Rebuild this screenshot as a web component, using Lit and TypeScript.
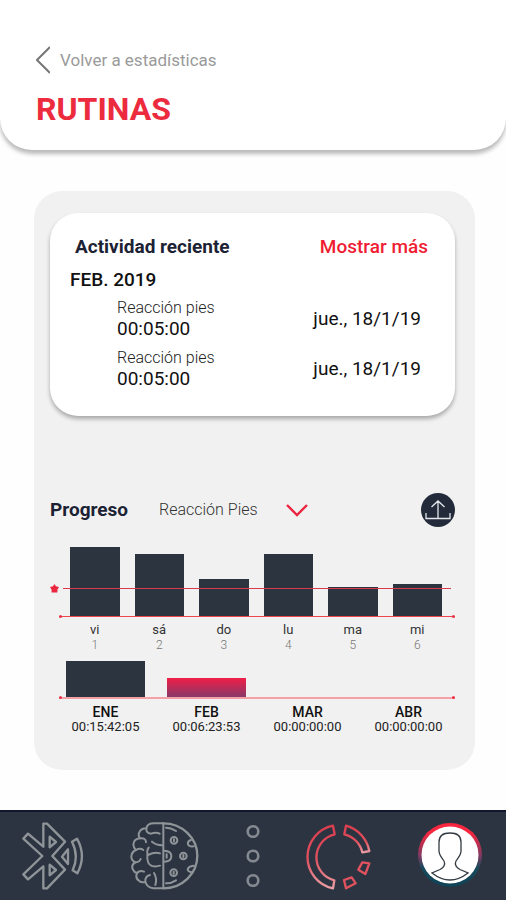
import { LitElement, html, svg, css } from "lit";
import { customElement, property } from "lit/decorators.js";

interface Activity {
  name: string;
  time: string;
  date: string;
}

interface Day {
  label: string;
  day: number;
  height: number;
}

interface Month {
  label: string;
  time: string;
  height: number;
  current?: boolean;
}

const ACTIVITIES: Activity[] = [
  { name: "Reacción pies", time: "00:05:00", date: "jue., 18/1/19" },
  { name: "Reacción pies", time: "00:05:00", date: "jue., 18/1/19" },
];

const DAYS: Day[] = [
  { label: "vi", day: 1, height: 70 },
  { label: "sá", day: 2, height: 63 },
  { label: "do", day: 3, height: 38 },
  { label: "lu", day: 4, height: 63 },
  { label: "ma", day: 5, height: 30 },
  { label: "mi", day: 6, height: 33 },
];

const MONTHS: Month[] = [
  { label: "ENE", time: "00:15:42:05", height: 37 },
  { label: "FEB", time: "00:06:23:53", height: 20, current: true },
  { label: "MAR", time: "00:00:00:00", height: 0 },
  { label: "ABR", time: "00:00:00:00", height: 0 },
];

@customElement("recent-activity")
export class RecentActivity extends LitElement {
  static styles = css`
    :host {
      display: block;
      background: #fff;
      border-radius: 28px;
      box-shadow: 0 3px 4px rgba(0, 0, 0, 0.3);
      padding: 18px 27px 26px 20px;
      color: #111;
    }
    .head {
      display: flex;
      justify-content: space-between;
      align-items: center;
      height: 32px;
      padding-left: 5px;
    }
    h2 {
      margin: 0;
      font-size: 19px;
      line-height: 24px;
      font-weight: 700;
      color: #1c2233;
    }
    .more {
      font-size: 19px;
      line-height: 24px;
      font-weight: 500;
      color: #f01c33;
      text-decoration: none;
    }
    h3 {
      margin: 5px 0 6px;
      font-size: 19px;
      line-height: 24px;
      font-weight: 500;
    }
    ul {
      list-style: none;
      margin: 0;
      padding: 0 7px 0 47px;
      display: grid;
      gap: 8px;
    }
    li {
      display: flex;
      justify-content: space-between;
      align-items: center;
    }
    .name {
      font-size: 16px;
      line-height: 20px;
      font-weight: 300;
      color: #222;
    }
    .time,
    .date {
      font-size: 19px;
      line-height: 22px;
    }
  `;

  render() {
    return html`
      <div class="head">
        <h2>Actividad reciente</h2>
        <a class="more" href="#actividad">Mostrar más</a>
      </div>
      <h3>FEB. 2019</h3>
      <ul>
        ${ACTIVITIES.map(
          (a) => html`<li>
            <div>
              <div class="name">${a.name}</div>
              <div class="time">${a.time}</div>
            </div>
            <div class="date">${a.date}</div>
          </li>`
        )}
      </ul>
    `;
  }
}

@customElement("progress-charts")
export class ProgressCharts extends LitElement {
  static styles = css`
    :host {
      display: block;
    }
    .head {
      display: flex;
      align-items: center;
      height: 34px;
      margin-bottom: 20px;
    }
    h2 {
      margin: 0;
      flex: 0 0 109px;
      font-size: 19px;
      line-height: 24px;
      font-weight: 700;
      color: #1c2233;
    }
    .picker {
      display: grid;
      align-items: center;
      width: 150px;
    }
    .picker > * {
      grid-area: 1 / 1;
    }
    select {
      appearance: none;
      width: 100%;
      border: 0;
      margin: 0;
      padding: 0;
      background: none;
      font: 300 16px/24px Roboto, sans-serif;
      color: #333;
    }
    .chevron {
      justify-self: end;
      pointer-events: none;
    }
    .upload {
      margin-left: auto;
      width: 34px;
      height: 34px;
      border: 0;
      padding: 0;
      border-radius: 50%;
      background: #232b3a;
      display: grid;
      place-items: center;
    }
    svg {
      display: block;
      fill: none;
    }
    .plot {
      position: relative;
      display: grid;
      align-items: end;
    }
    .days,
    .day-labels {
      grid-template-columns: repeat(6, 1fr);
      column-gap: 15px;
      padding: 0 13px 0 20px;
    }
    .days {
      height: 70px;
    }
    .months,
    .month-labels {
      grid-template-columns: repeat(4, 1fr);
      column-gap: 22px;
      padding: 0 7px 0 16px;
    }
    .months {
      height: 37px;
      margin-top: 8px;
    }
    .bar {
      background: #2c3440;
    }
    .current {
      background: linear-gradient(#f01f47, #83396b);
    }
    .axis {
      position: absolute;
      left: 9px;
      right: 0;
      bottom: 0;
      height: 1px;
      background: #f0454f;
    }
    .months .axis {
      bottom: -1px;
      height: 2px;
      background: #f5a0a6;
    }
    .axis::before,
    .axis::after {
      content: "";
      position: absolute;
      top: -1px;
      width: 3px;
      height: 3px;
      border-radius: 50%;
      background: #ea3346;
    }
    .axis::before {
      left: 0;
    }
    .axis::after {
      right: 0;
    }
    .goal {
      position: absolute;
      left: 0;
      right: 4px;
      bottom: 24px;
      display: flex;
      align-items: center;
      gap: 4px;
    }
    .goal-line {
      flex: 1;
      height: 1px;
      background: #d93a4c;
    }
    .labels {
      display: grid;
      list-style: none;
      margin: 0;
      text-align: center;
    }
    .labels li {
      display: grid;
      justify-items: center;
    }
    .day-labels {
      margin-top: 5px;
    }
    .month-labels {
      margin-top: 6px;
    }
    .day {
      font-size: 13px;
      line-height: 16px;
      color: #333;
    }
    .number {
      font-size: 12px;
      line-height: 15px;
      font-weight: 300;
      color: #777;
    }
    .month {
      font-size: 14px;
      line-height: 16px;
      font-weight: 500;
      color: #111;
    }
    .total {
      font-size: 13px;
      line-height: 14px;
      color: #222;
      white-space: nowrap;
    }
  `;

  render() {
    return html`
      <div class="head">
        <h2>Progreso</h2>
        <div class="picker">
          <select aria-label="Rutina">
            <option>Reacción Pies</option>
          </select>
          <svg class="chevron" width="24" height="16" viewBox="0 0 24 16">
            <path d="M2 3 12 13 22 3" stroke="#ea2640" stroke-width="2.4" />
          </svg>
        </div>
        <button class="upload" aria-label="Compartir">
          <svg width="28" height="24" viewBox="0 0 28 24" stroke="#e3e6ea" stroke-width="1.3">
            <path d="M2 15V20.500H26V15M14 20V3M7.500 9 14 3 20.500 9" />
          </svg>
        </button>
      </div>
      <div class="plot days">
        ${DAYS.map((d) => html`<div class="bar" style="height:${d.height}px"></div>`)}
        <div class="goal">
          <svg width="9" height="9" viewBox="0 0 10 10">
            <path
              fill="#ea2640"
              d="M5 0 6.600 2.600 10 3.300 8.300 6 8.200 9.500H1.800L1.700 6 0 3.300 3.400 2.600Z"
            />
          </svg>
          <div class="goal-line"></div>
        </div>
        <div class="axis"></div>
      </div>
      <ul class="labels day-labels">
        ${DAYS.map(
          (d) => html`<li><span class="day">${d.label}</span><span class="number">${d.day}</span></li>`
        )}
      </ul>
      <div class="plot months">
        ${MONTHS.map(
          (m) => html`<div class="bar ${m.current ? "current" : ""}" style="height:${m.height}px"></div>`
        )}
        <div class="axis"></div>
      </div>
      <ul class="labels month-labels">
        ${MONTHS.map(
          (m) => html`<li><span class="month">${m.label}</span><span class="total">${m.time}</span></li>`
        )}
      </ul>
    `;
  }
}

const bluetoothIcon = svg`
  <svg width="62" height="70" viewBox="36 60 186 210" stroke="#8f9498" stroke-width="7" stroke-linejoin="round">
    <path d="M100 68H111L165 122 127 165 165 206 111 262H100V196L54 235 40 220 97 165 40 113 54 98 100 137Z" />
    <path d="M119 107 138 123 119 139ZM119 191 138 207 119 223ZM174 145V189L156 167Z" />
    <path d="M186 122 201 113Q230 165 202 217L188 208Q208 165 186 122Z" />
  </svg>`;

const brainIcon = svg`
  <svg width="70" height="70" viewBox="358 60 210 210" stroke="#8f9498" stroke-width="6" stroke-linecap="round" stroke-linejoin="round">
    <path d="M458 67V262H428Q410 260 404 243 392 246 386 240 373 232 379 216 370 214 367 206 360 192 374 184 362 178 362 168 362 153 376 147 368 140 368 130 370 114 388 112 382 104 385 96 390 82 407 82 410 66 432 67Z" />
    <path d="M407 82Q406 97 421 98 436 92 447 98M388 112Q406 110 406 124M424 122Q436 132 454 133M376 147Q388 140 398 147M414 140Q406 152 412 162 432 152 448 157M374 184Q386 184 390 174M410 160Q408 190 424 195 436 198 448 194M379 216Q388 206 400 212M404 243Q402 226 418 222M430 216Q440 232 434 252" />
    <path d="M458 67A102 97.500 0 0 1 458 262" stroke-width="7" />
    <path d="M466 80Q480 80 496 90M466 247Q480 248 496 238" />
    <circle cx="490" cy="118" r="10" /><circle cx="518" cy="165" r="10" />
    <circle cx="489" cy="215" r="10" />
    <path d="M490 115V121M518 162V168M489 212V218M468 160V170" />
    <path d="M461 149Q482 150 482 165 482 182 461 182M541 117Q530 120 532 130 536 138 549 136M549 194Q532 196 531 206 534 214 541 213" />
  </svg>`;

const dotsIcon = svg`
  <svg width="14" height="64" viewBox="0 0 14 64" stroke="#858a90" stroke-width="2.600">
    <circle cx="7" cy="7.500" r="5.300" /><circle cx="7" cy="32" r="5.300" /><circle cx="7" cy="56.500" r="5.300" />
  </svg>`;

const ringIcon = svg`
  <svg width="66" height="70" viewBox="256 62 198 210" stroke-width="7" stroke-linejoin="round">
    <defs>
      <linearGradient id="ring" gradientUnits="userSpaceOnUse" x1="0" y1="72" x2="0" y2="268">
        <stop offset="0" stop-color="#dc3d4d" />
        <stop offset="0.550" stop-color="#e0525f" />
        <stop offset="1" stop-color="#eba3aa" />
      </linearGradient>
      <linearGradient id="arc" gradientUnits="userSpaceOnUse" x1="0" y1="74" x2="0" y2="160">
        <stop offset="0" stop-color="#dc3d4d" />
        <stop offset="0.600" stop-color="#e0525f" />
        <stop offset="1" stop-color="#eba3aa" />
      </linearGradient>
    </defs>
    <path stroke="url(#ring)" d="M340 76A96 96 0 0 0 340 264L344 240A71 71 0 0 1 345 102Z" />
    <path stroke="url(#arc)" d="M379 76A98 98 0 0 1 449 152L428 156A72 72 0 0 0 374 102Z" />
    <path stroke="#e0525f" d="M428 186 449 189 437 221 416 208Z" />
    <path stroke="#e0525f" d="M373 239 396 231 408 249 379 264Z" />
  </svg>`;

const profileIcon = svg`
  <svg width="66" height="66" viewBox="0 0 66 66">
    <defs>
      <linearGradient id="halo" x1="0" y1="0" x2="0" y2="1">
        <stop offset="0.150" stop-color="#f8263f" />
        <stop offset="0.520" stop-color="#7d3a62" />
        <stop offset="0.700" stop-color="#174a5c" />
        <stop offset="1" stop-color="#0f4255" />
      </linearGradient>
    </defs>
    <circle cx="33" cy="32" r="32" fill="url(#halo)" />
    <circle cx="33" cy="32" r="28.500" fill="#fff" />
    <path
      d="M33 10C26 10 22 13 22 19V28C22 32 25 35 27 38 29 42 26 45 23 46.500L15 50Q24 57 33 57T51 50L43 46.500C40 45 37 42 39 38 41 35 44 32 44 28V19C44 13 40 10 33 10Z"
      stroke="#333b42"
      stroke-width="1.300"
    />
  </svg>`;

@customElement("nav-bar")
export class NavBar extends LitElement {
  static styles = css`
    :host {
      display: block;
      background: #2d3441;
      border-top: 2px solid #0f172b;
    }
    nav {
      display: flex;
      justify-content: space-between;
      align-items: center;
      height: 88px;
      padding: 0 23px 0 22px;
    }
    a {
      display: block;
    }
    svg {
      display: block;
      fill: none;
    }
  `;

  render() {
    return html`
      <nav>
        <a href="#conexion" aria-label="Conexión">${bluetoothIcon}</a>
        <a href="#entrenamiento" aria-label="Entrenamiento">${brainIcon}</a>
        <a href="#menu" aria-label="Menú">${dotsIcon}</a>
        <a href="#estadisticas" aria-label="Estadísticas">${ringIcon}</a>
        <a href="#perfil" aria-label="Perfil">${profileIcon}</a>
      </nav>
    `;
  }
}

@customElement("app-root")
export class AppRoot extends LitElement {
  @property() heading = "RUTINAS";

  static styles = css`
    :host {
      display: flex;
      flex-direction: column;
      min-height: 100vh;
      background: #fefefe;
      font-family: Roboto, sans-serif;
    }
    header {
      padding: 44px 36px 21px;
      background: #fff;
      border-radius: 0 0 32px 32px;
      box-shadow: 0 4px 4px rgba(0, 0, 0, 0.27);
    }
    .back {
      display: flex;
      width: fit-content;
      align-items: center;
      gap: 10px;
      height: 32px;
      font-size: 17px;
      line-height: 24px;
      color: #9a9a9a;
      text-decoration: none;
    }
    h1 {
      margin: 13px 0 0;
      font-size: 32px;
      line-height: 40px;
      font-weight: 700;
      color: #ec2c3e;
    }
    main {
      flex: 1;
      padding: 41px 31px 40px 34px;
    }
    .panel {
      background: #f1f1f1;
      border-radius: 28px;
      padding: 22px 20px 36px 16px;
    }
    progress-charts {
      margin-top: 77px;
    }
  `;

  render() {
    return html`
      <header>
        <a class="back" href="#estadisticas">
          <svg width="14" height="28" viewBox="0 0 14 28" fill="none" stroke="#777" stroke-width="2">
            <path d="M14 1 1 14 14 27" />
          </svg>
          Volver a estadísticas
        </a>
        <h1>${this.heading}</h1>
      </header>
      <main>
        <section class="panel">
          <recent-activity></recent-activity>
          <progress-charts></progress-charts>
        </section>
      </main>
      <nav-bar></nav-bar>
    `;
  }
}
